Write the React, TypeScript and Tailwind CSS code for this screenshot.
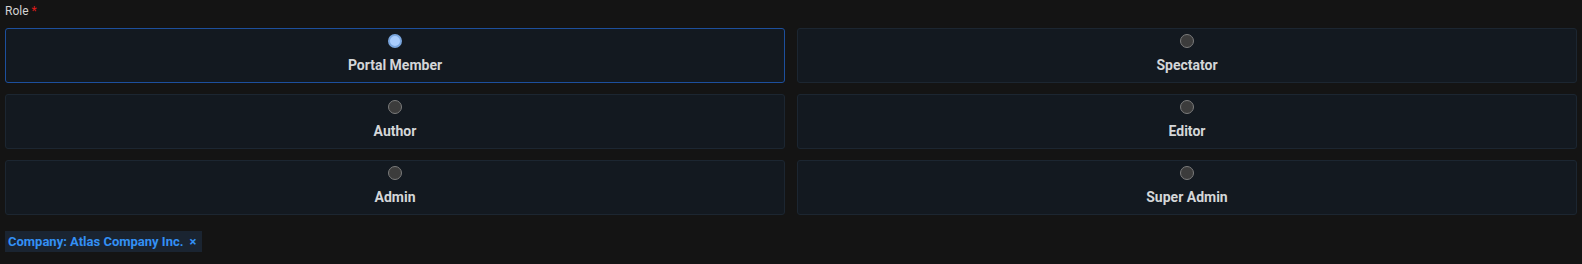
import React from 'react';

const roles = ['Portal Member', 'Spectator', 'Author', 'Editor', 'Admin', 'Super Admin'];

function RoleCard({ label, selected }: { label: string; selected: boolean }) {
  return (
    <div
      className={`flex h-[55px] flex-col items-center rounded-[3px] border bg-[#131920] pt-[5px] ${
        selected ? 'border-[#1d4f9c]' : 'border-[#1c2631]'
      }`}
    >
      {selected ? (
        <span className="h-[14px] w-[14px] rounded-full border-[2px] border-[#7aa6de] bg-[#a9cdfd]" />
      ) : (
        <span className="h-[14px] w-[14px] rounded-full border-[1.5px] border-[#7b7b7b] bg-[#3c3c3c]" />
      )}
      <span className="mt-[7px] text-[14px] font-bold leading-5 text-[#d4d6d8]">{label}</span>
    </div>
  );
}

export default function App() {
  const selected = 'Portal Member';

  return (
    <div className="min-h-[264px] w-full bg-[#141414] px-[5px] pt-[3px] font-['Roboto',sans-serif]">
      <div className="mb-[9px] text-[12px] leading-4 text-[#d2d2d2]">
        Role <span className="text-[#e01b1b]">*</span>
      </div>

      {/* Opciones de rol */}
      <div className="grid grid-cols-2 gap-x-[12px] gap-y-[11px]">
        {roles.map((role) => (
          <RoleCard key={role} label={role} selected={role === selected} />
        ))}
      </div>

      <div className="mt-[16px] flex">
        <span className="flex h-[21px] items-center gap-[6px] bg-[#1a2431] pl-[3px] pr-[6px] text-[13px] font-bold text-[#3390f5]">
          Company: Atlas Company Inc.
          <span className="text-[13px] leading-none">×</span>
        </span>
      </div>
    </div>
  );
}
